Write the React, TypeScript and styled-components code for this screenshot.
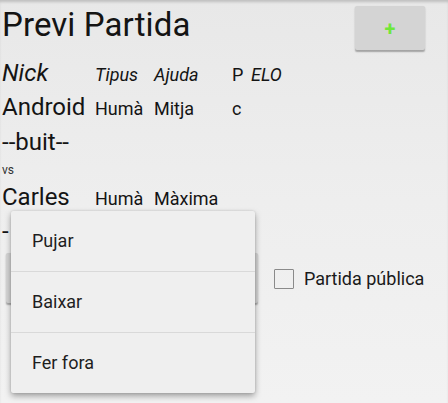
import React from "react";
import styled, { createGlobalStyle } from "styled-components";

const Global = createGlobalStyle`
  html, body { margin: 0; padding: 0; }
  body {
    font-family: Roboto, "Noto Sans", sans-serif;
    color: #141414;
    overflow: hidden;
  }
`;

const Page = styled.div`
  position: relative;
  width: 448px;
  height: 403px;
  box-sizing: border-box;
  padding-left: 2px;
  background: linear-gradient(to bottom, #e8e8e8 0%, #eeeeee 50%, #f2f2f2 100%);
  box-shadow: inset 0 3px 3px -1px rgba(0, 0, 0, 0.18);
  overflow: hidden;
`;

const Header = styled.div`
  display: flex;
  justify-content: space-between;
  align-items: flex-start;
  padding: 5px 23px 0 0;
  height: 52px;
  box-sizing: border-box;
`;

const Title = styled.h1`
  margin: 0;
  font-weight: 400;
  font-size: 33px;
  line-height: normal;
  letter-spacing: 0.1px;
  margin-top: 0.4px;
`;

const AddButton = styled.button`
  width: 70px;
  height: 44px;
  margin-top: 1px;
  border: none;
  border-radius: 2px;
  background: #d4d4d4;
  box-shadow: 0 1.5px 1.5px rgba(0, 0, 0, 0.3);
  color: #6fe83a;
  font-family: Roboto, sans-serif;
  font-weight: 700;
  font-size: 20px;
  line-height: 1;
  padding: 2px 0 0;
`;

const PlayerRow = styled.div<{ $top?: number }>`
  display: grid;
  grid-template-columns: 93px 59px 78px 19px auto;
  align-items: baseline;
  line-height: 33px;
  margin-top: ${(p) => p.$top ?? 0}px;
`;

const Cell = styled.span<{ $big?: boolean; $italic?: boolean }>`
  font-size: ${(p) => (p.$big ? 24 : 18)}px;
  font-style: ${(p) => (p.$italic ? "italic" : "normal")};
  white-space: nowrap;
`;

const Versus = styled.div`
  font-size: 12px;
  line-height: 22px;
  color: #333;
`;

const BottomRow = styled.div`
  display: flex;
  align-items: center;
  margin-top: 5px;
`;

const WideButton = styled.div`
  width: 252px;
  height: 50px;
  margin-left: 4px;
  background: #d4d4d4;
  border-radius: 2px;
  box-shadow: 0 1.5px 1.5px rgba(0, 0, 0, 0.3);
`;

const CheckBox = styled.span`
  width: 20px;
  height: 20px;
  box-sizing: border-box;
  border: 1.5px solid #8a8a8a;
  border-radius: 1px;
  margin-left: 16px;
  margin-top: 2px;
`;

const CheckLabel = styled.span`
  font-size: 18px;
  margin-left: 10px;
  color: #1a1a1a;
`;

const Menu = styled.ul`
  position: absolute;
  left: 11px;
  top: 211px;
  width: 244px;
  margin: 0;
  padding: 0;
  list-style: none;
  background: #efefef;
  border-radius: 2px;
  box-shadow: 0 3px 6px rgba(0, 0, 0, 0.35), 0 0 2px rgba(0, 0, 0, 0.15);
`;

const MenuItem = styled.li`
  height: 60px;
  line-height: 60px;
  padding-left: 21px;
  font-size: 18px;
  color: #1e1e1e;
  & + & {
    border-top: 1px solid #d9d9d9;
  }
`;

export default function App() {
  return (
    <>
      <Global />
      <Page>
        <Header>
          <Title>Previ Partida</Title>
          <AddButton>+</AddButton>
        </Header>
        <PlayerRow $top={5}>
          <Cell $big $italic>Nick</Cell>
          <Cell $italic>Tipus</Cell>
          <Cell $italic>Ajuda</Cell>
          <Cell>P</Cell>
          <Cell $italic>ELO</Cell>
        </PlayerRow>
        <PlayerRow>
          <Cell $big>Android</Cell>
          <Cell>Humà</Cell>
          <Cell>Mitja</Cell>
          <Cell>c</Cell>
          <Cell />
        </PlayerRow>
        <PlayerRow $top={1}>
          <Cell $big>--buit--</Cell>
        </PlayerRow>
        <Versus>vs</Versus>
        <PlayerRow>
          <Cell $big>Carles</Cell>
          <Cell>Humà</Cell>
          <Cell>Màxima</Cell>
        </PlayerRow>
        <PlayerRow>
          <Cell $big>-</Cell>
        </PlayerRow>
        <BottomRow>
          <WideButton />
          <CheckBox />
          <CheckLabel>Partida pública</CheckLabel>
        </BottomRow>
        <Menu>
          <MenuItem>Pujar</MenuItem>
          <MenuItem>Baixar</MenuItem>
          <MenuItem>Fer fora</MenuItem>
        </Menu>
      </Page>
    </>
  );
}
